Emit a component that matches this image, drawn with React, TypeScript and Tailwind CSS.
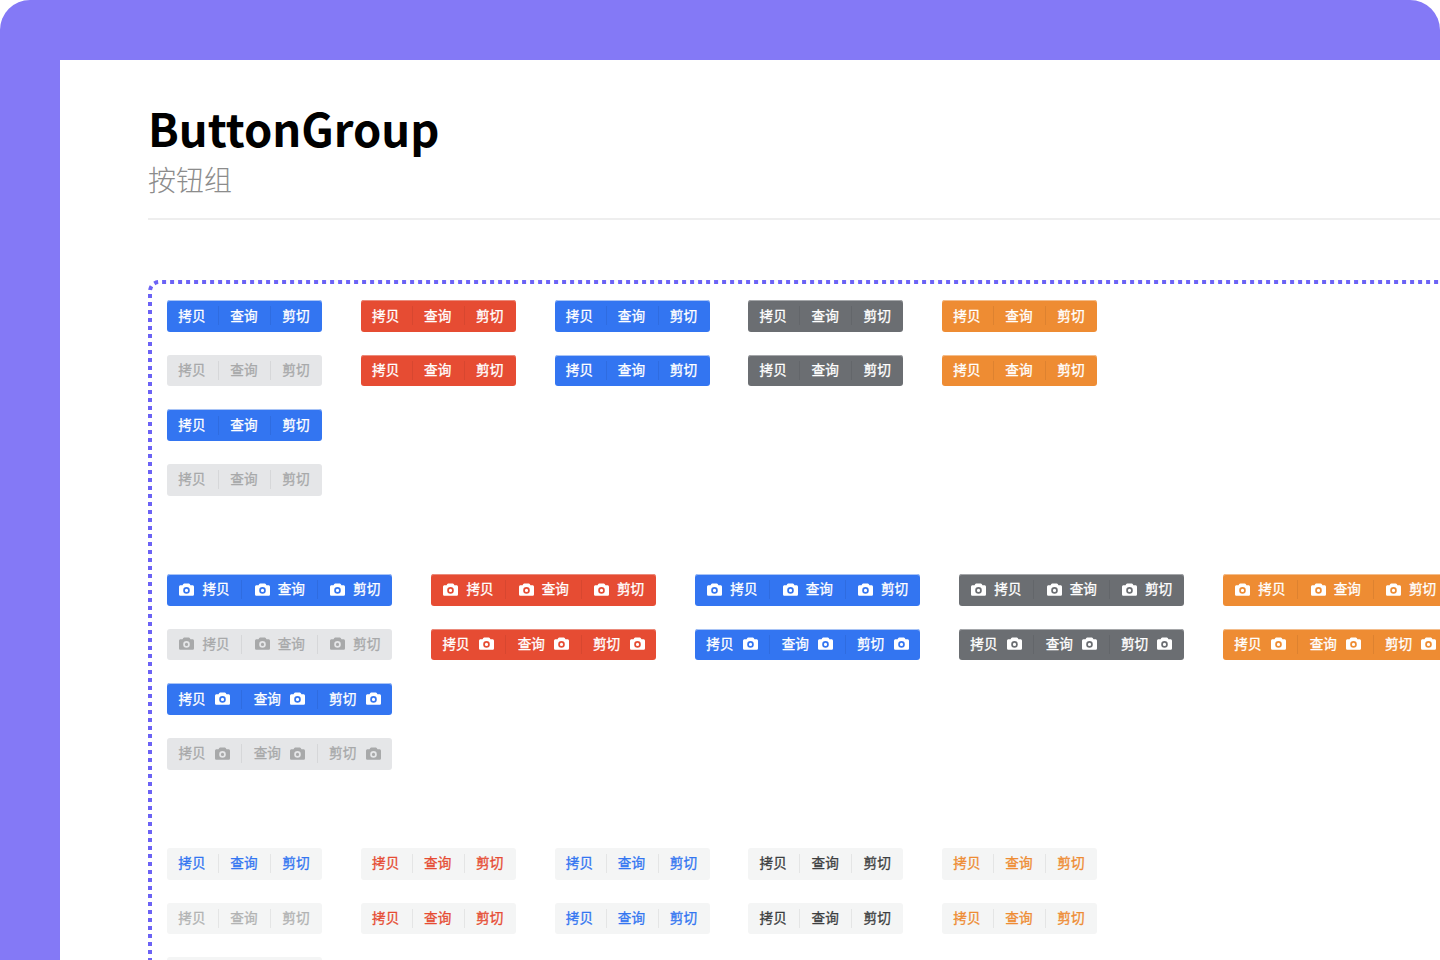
const labels = ["拷贝", "查询", "剪切"];

type Tone = {
  wrap: string;
  text: string;
  line: string;
};

const solid = {
  blue: { wrap: "bg-[#3375f1] shadow-[inset_0_1px_0_#a9c4f6]", text: "text-white", line: "bg-[#2f6ce0]" },
  red: { wrap: "bg-[#e64c33] shadow-[inset_0_1px_0_#eb8b7c]", text: "text-white", line: "bg-[#d74730]" },
  gray: { wrap: "bg-[#6b6e72] shadow-[inset_0_1px_0_#a5a7aa]", text: "text-white", line: "bg-[#63666a]" },
  orange: { wrap: "bg-[#ee8c33] shadow-[inset_0_1px_0_#f4bd8b]", text: "text-white", line: "bg-[#dd8230]" },
  off: { wrap: "bg-[#e5e6e8]", text: "text-[#a8a9aa]", line: "bg-[#d6d7d9]" },
};

const light = {
  blue: { wrap: "bg-[#f4f5f5]", text: "text-[#3375f1]", line: "bg-[#e4e5e5]" },
  red: { wrap: "bg-[#f4f5f5]", text: "text-[#e64c33]", line: "bg-[#e4e5e5]" },
  dark: { wrap: "bg-[#f4f5f5]", text: "text-[#3c3e40]", line: "bg-[#e4e5e5]" },
  orange: { wrap: "bg-[#f4f5f5]", text: "text-[#ee8c33]", line: "bg-[#e4e5e5]" },
  off: { wrap: "bg-[#f4f5f5]", text: "text-[#b2b3b3]", line: "bg-[#e4e5e5]" },
};

function CameraIcon() {
  return (
    <svg width="15" height="13" viewBox="0 0 15 13" className="shrink-0">
      <path
        fill="currentColor"
        fillRule="evenodd"
        d="M5.2.4h4.6c.4 0 .7.2.9.5l.8 1.3h1.9c.9 0 1.6.7 1.6 1.6v7.4c0 .9-.7 1.6-1.6 1.6H1.6C.7 12.8 0 12.1 0 11.2V3.8c0-.9.7-1.6 1.6-1.6h1.9L4.3.9c.2-.3.5-.5.9-.5ZM7.5 4.1a3.3 3.3 0 1 0 0 6.6 3.3 3.3 0 0 0 0-6.6Zm0 1.7a1.6 1.6 0 1 1 0 3.2 1.6 1.6 0 0 1 0-3.2Z"
      />
    </svg>
  );
}

function Group({ tone, icon }: { tone: Tone; icon?: "left" | "right" }) {
  return (
    <div className={`flex h-[31.6px] w-fit items-center rounded-[3px] ${tone.wrap} ${tone.text}`}>
      {labels.map((label, i) => (
        <div key={label} className="flex items-center">
          {i > 0 && <span className={`h-[19px] w-px ${tone.line}`} />}
          <button
            className={`flex items-center pb-[1px] text-[13.6px] leading-none [-webkit-text-stroke:0.3px_currentColor] ${
              icon === "left"
                ? "w-[74.33px] gap-[8px] pl-[12.4px]"
                : icon === "right"
                  ? "w-[74.33px] gap-[9.3px] pl-[11.4px]"
                  : "w-[51px] pl-[11.3px]"
            }`}
          >
            {icon === "left" && <CameraIcon />}
            <span>{label}</span>
            {icon === "right" && <CameraIcon />}
          </button>
        </div>
      ))}
    </div>
  );
}

function Column({ children }: { children: React.ReactNode }) {
  return <div className="flex flex-col gap-[23.07px]">{children}</div>;
}

export default function App() {
  return (
    <div
      className="h-[960px] w-[1440px] overflow-hidden bg-white"
      style={{ fontFamily: '"Noto Sans CJK SC", "Noto Sans", sans-serif' }}
    >
      <div className="h-full rounded-t-[30px] bg-[#8479f6] pt-[60px] pl-[60px]">
        <div className="h-full bg-white pl-[88px]">
          <header className="border-b-2 border-[#eeeeee] pt-[37px] pb-[19px]">
            <h1 className="mb-[2px] text-[45.3px] leading-[60px] font-bold text-black">ButtonGroup</h1>
            <p className="text-[28px] leading-[40px] font-light text-[#8c8c8c]">按钮组</p>
          </header>

          <section className="relative mt-[60px] flex flex-col gap-[78.4px] pt-[20px] pl-[19px]">
            <svg className="absolute top-0 left-0 overflow-visible" width="1300" height="700">
              <path
                d="M2 1002V11.33A9.33 9.33 0 0 1 11.33 2H1400"
                fill="none"
                stroke="#6c63f5"
                strokeWidth="4"
                strokeDasharray="4 4"
              />
            </svg>

            <div className="flex gap-[38.75px]">
              <Column>
                <Group tone={solid.blue} />
                <Group tone={solid.off} />
                <Group tone={solid.blue} />
                <Group tone={solid.off} />
              </Column>
              {[solid.red, solid.blue, solid.gray, solid.orange].map((tone, i) => (
                <Column key={i}>
                  <Group tone={tone} />
                  <Group tone={tone} />
                </Column>
              ))}
            </div>

            <div className="flex gap-[39px]">
              <Column>
                <Group tone={solid.blue} icon="left" />
                <Group tone={solid.off} icon="left" />
                <Group tone={solid.blue} icon="right" />
                <Group tone={solid.off} icon="right" />
              </Column>
              {[solid.red, solid.blue, solid.gray, solid.orange].map((tone, i) => (
                <Column key={i}>
                  <Group tone={tone} icon="left" />
                  <Group tone={tone} icon="right" />
                </Column>
              ))}
            </div>

            <div className="flex gap-[38.75px]">
              <Column>
                <Group tone={light.blue} />
                <Group tone={light.off} />
                <Group tone={light.blue} />
              </Column>
              {[light.red, light.blue, light.dark, light.orange].map((tone, i) => (
                <Column key={i}>
                  <Group tone={tone} />
                  <Group tone={tone} />
                </Column>
              ))}
            </div>
          </section>
        </div>
      </div>
    </div>
  );
}
